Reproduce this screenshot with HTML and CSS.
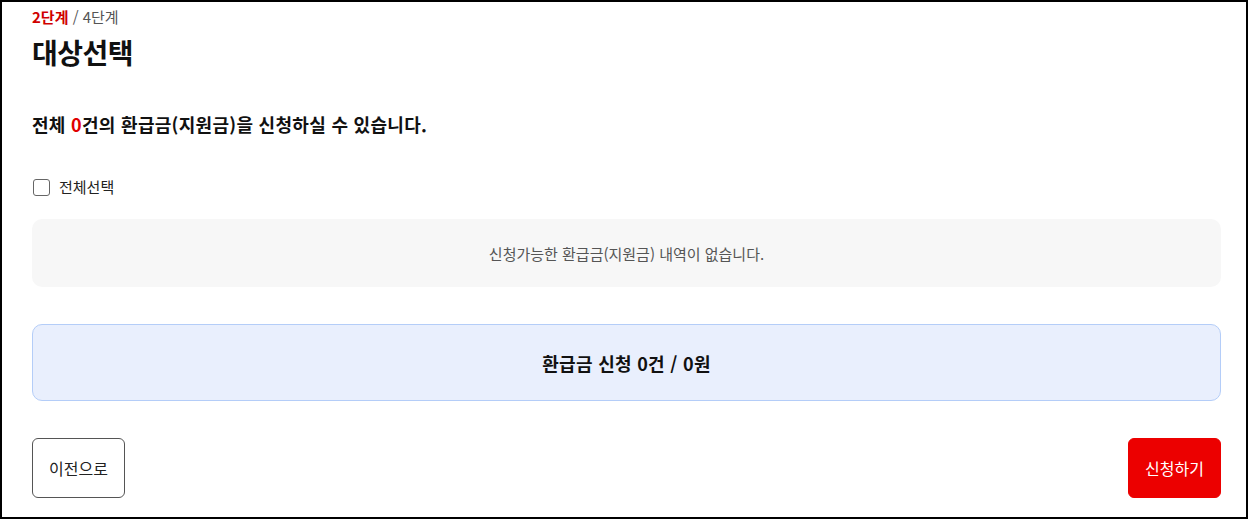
FILE: index.html
```html
<!DOCTYPE html>
<html lang="ko">
<head>
<meta charset="utf-8">
<title>대상선택</title>
<link rel="stylesheet" href="styles.css">
</head>
<body>
<div class="frame">
  <div class="step"><span class="step-cur">2단계</span> / 4단계</div>
  <h1 class="title">대상선택</h1>
  <p class="summary">전체 <span class="count">0</span>건의 환급금(지원금)을 신청하실 수 있습니다.</p>
  <label class="check-all">
    <span class="box"></span>
    <span class="check-label">전체선택</span>
  </label>
  <div class="empty">신청가능한 환급금(지원금) 내역이 없습니다.</div>
  <div class="total">환급금 신청 0건 / 0원</div>
  <div class="actions">
    <button class="btn btn-prev" type="button">이전으로</button>
    <button class="btn btn-apply" type="button">신청하기</button>
  </div>
</div>
</body>
</html>
```

FILE: styles.css
```css
html, body {
  margin: 0;
  padding: 0;
  background: #fff;
}
body {
  font-family: "Noto Sans CJK KR", "Noto Sans", sans-serif;
  color: #111;
}
.frame {
  box-sizing: border-box;
  width: 1248px;
  height: 519px;
  border: 2px solid #000;
  padding: 0 25px 0 30px;
  display: flex;
  flex-direction: column;
}
.step {
  margin-top: 5px;
  font-size: 15px;
  line-height: 20px;
  color: #555;
}
.step-cur {
  color: #d00000;
  font-weight: 700;
}
.title {
  margin: 7px 0 0;
  font-size: 28px;
  line-height: 36px;
  font-weight: 700;
  color: #111;
  letter-spacing: -0.5px;
}
.summary {
  margin: 41px 0 0;
  font-size: 18px;
  line-height: 26px;
  font-weight: 700;
  color: #111;
  letter-spacing: 0.3px;
}
.count {
  color: #e00000;
}
.check-all {
  margin-top: 40px;
  display: flex;
  align-items: center;
  gap: 9px;
  height: 20px;
}
.box {
  box-sizing: border-box;
  width: 17px;
  height: 17px;
  margin-left: 1px;
  border: 1px solid #666;
  border-radius: 3px;
  background: #fff;
}
.check-label {
  font-size: 15px;
  line-height: 20px;
  color: #222;
}
.empty {
  margin-top: 22px;
  height: 68px;
  border-radius: 10px;
  background: #f7f7f7;
  display: flex;
  align-items: center;
  justify-content: center;
  font-size: 15px;
  color: #555;
}
.total {
  box-sizing: border-box;
  margin-top: 37px;
  height: 77px;
  border: 1px solid #b4cdf8;
  border-radius: 10px;
  background: #e9effd;
  display: flex;
  align-items: center;
  justify-content: center;
  font-size: 18px;
  font-weight: 700;
  color: #111;
  letter-spacing: 0.3px;
}
.actions {
  margin-top: 37px;
  display: flex;
  justify-content: space-between;
}
.btn {
  box-sizing: border-box;
  width: 93px;
  height: 60px;
  border-radius: 6px;
  font-family: inherit;
  font-size: 16px;
  padding: 0;
  cursor: pointer;
}
.btn-prev {
  background: #fff;
  border: 1px solid #555;
  color: #222;
}
.btn-apply {
  background: #ec0000;
  border: 1px solid #ec0000;
  color: #fff;
}
```
